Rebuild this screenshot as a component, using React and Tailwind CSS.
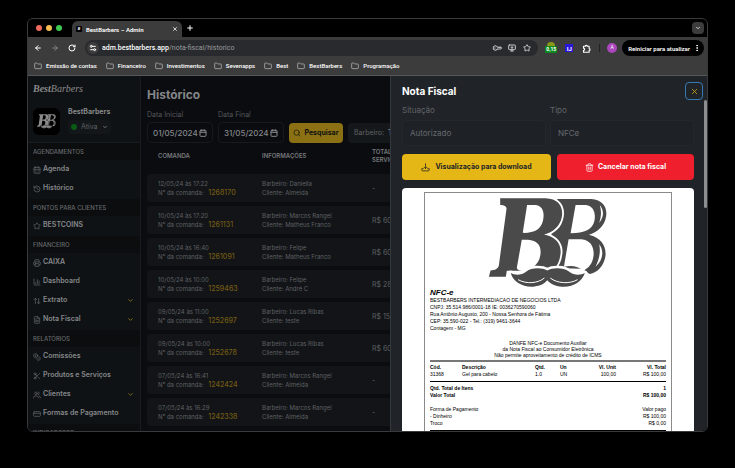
import React from "react";
import {
  ArrowLeft,
  ArrowRight,
  RotateCw,
  Settings2,
  KeyRound,
  MonitorDown,
  Star,
  Folder,
  X,
  Plus,
  ChevronDown,
  History,
  CalendarDays,
  Calendar,
  ArrowUpDown,
  ChartColumn,
  FileText,
  Coins,
  Scissors,
  Users,
  CreditCard,
  Search,
  Trash2,
  EllipsisVertical,
  Printer,
} from "lucide-react";

const bookmarks = [
  "Emissão de contas",
  "Financeiro",
  "Investimentos",
  "Sevenapps",
  "Best",
  "BestBarbers",
  "Programação",
];

const menu = [
  {
    title: "AGENDAMENTOS",
    items: [
      { label: "Agenda", icon: CalendarDays },
      { label: "Histórico", icon: History },
    ],
  },
  {
    title: "PONTOS PARA CLIENTES",
    items: [{ label: "BESTCOINS", icon: Star }],
  },
  {
    title: "FINANCEIRO",
    items: [
      { label: "CAIXA", icon: Printer },
      { label: "Dashboard", icon: ChartColumn },
      { label: "Extrato", icon: ArrowUpDown, expandable: true },
      { label: "Nota Fiscal", icon: FileText, expandable: true },
    ],
  },
  {
    title: "RELATÓRIOS",
    items: [
      { label: "Comissões", icon: Coins },
      { label: "Produtos e Serviços", icon: Scissors },
      { label: "Clientes", icon: Users, expandable: true },
      { label: "Formas de Pagamento", icon: CreditCard },
    ],
  },
  { title: "INDICADORES", items: [] },
];

const orders = [
  { date: "12/05/24 às 17:22", id: "1268170", barber: "Daniella", client: "Almeida", total: "-" },
  { date: "10/05/24 às 17:20", id: "1261131", barber: "Marcos Rangel", client: "Matheus Franco", total: "R$ 60,00" },
  { date: "10/05/24 às 16:40", id: "1261091", barber: "Felipe", client: "Matheus Franco", total: "R$ 60,00" },
  { date: "10/05/24 às 10:00", id: "1259463", barber: "Felipe", client: "André C", total: "R$ 28,00" },
  { date: "09/05/24 às 11:00", id: "1252697", barber: "Lucas Ribas", client: "teste", total: "R$ 15,00" },
  { date: "09/05/24 às 10:00", id: "1252678", barber: "Lucas Ribas", client: "teste", total: "R$ 60,00" },
  { date: "07/05/24 às 16:41", id: "1242424", barber: "Marcos Rangel", client: "Almeida", total: "-" },
  { date: "07/05/24 às 16:29", id: "1242338", barber: "Marcos Rangel", client: "Almeida", total: "-" },
];

function Monogram({ className, ink, paper }) {
  return (
    <svg viewBox="280 48 360 274" className={className} aria-hidden="true">
      <path
        fill={ink}
        d="M488 54 L590 54 C626 57 639 80 635 106 C631 136 608 154 583 162 C622 171 636 198 633 226 C629 256 608 277 586 280 C577 276 574 268 560 264 L480 262 L470 158 Z"
      />
      <path
        fill={paper}
        d="M543 72 L574 72 C597 75 604 95 600 119 C595 146 570 157 528 157 Z M522 175 L560 175 C590 178 600 200 597 226 C594 250 582 262 567 270 C545 252 525 255 508 258 Z"
      />
      <path fill={paper} d="M616 72 C629 88 629 108 614 126 C621 106 621 90 616 72 Z M614 190 C629 208 627 238 603 258 C615 234 619 212 614 190 Z" />
      <path
        fill={ink}
        stroke={paper}
        strokeWidth="11"
        paintOrder="stroke"
        d="M316 52 L452 52 C492 53 506 78 502 106 C497 137 475 154 448 161 C482 167 500 188 498 216 C496 240 488 254 478 266 L372 270 L336 270 L333 288 L282 288 L287 269 C300 268 309 265 312 254 L335 84 C336 76 328 72 316 72 Z"
      />
      <path
        fill={paper}
        d="M397 72 L421 72 C445 74 450 95 445 119 C439 146 418 157 384 156 Z M381 177 L400 177 C430 179 441 197 437 223 C433 250 414 264 394 269 C384 274 368 270 366 262 Z"
      />
      <path
        fill={ink}
        stroke={paper}
        strokeWidth="15"
        strokeLinejoin="round"
        paintOrder="stroke"
        d="M458 269 C440 259 408 261 395 272 C380 284 362 284 348 277 C354 304 385 320 415 318 C438 317 450 308 458 299 C466 308 479 318 503 318 C535 320 562 304 571 277 C557 284 538 284 523 272 C508 261 476 259 458 269 Z"
      />
      <path
        fill="none"
        stroke={paper}
        strokeWidth="3"
        d="M370 297 C395 311 430 308 449 292 M467 292 C487 308 524 311 549 297"
      />
    </svg>
  );
}

function DownloadTray({ className }) {
  return (
    <svg viewBox="0 0 24 24" className={className} fill="none" stroke="currentColor" strokeWidth="2" strokeLinecap="round" strokeLinejoin="round" aria-hidden="true">
      <path d="M12 2v12M8 11l4 4 4-4M6 15H2v3c0 2 1 3 3 3h14c2 0 3-1 3-3v-3h-4" />
    </svg>
  );
}

function ExtensionPiece({ className }) {
  return (
    <svg viewBox="0 0 24 24" className={className} fill="none" stroke="currentColor" strokeWidth="3" strokeLinejoin="round" aria-hidden="true">
      <path d="M4 6h5a2 2 0 0 1 5 0h5v6a2 2 0 0 1 0 5v5H4v-5a3 3 0 0 0 0-6Z" />
    </svg>
  );
}

function BrowserChrome() {
  return (
    <header className="shrink-0 border-b border-[#54575a] bg-[#3c3c3c] font-[Roboto,sans-serif] text-white">
      <div className="flex h-[18px] items-end bg-black">
        <div className="flex w-11 items-center gap-1 self-center pl-2">
          <span className="size-[6px] rounded-full bg-[#ed6a5e]" />
          <span className="size-[6px] rounded-full bg-[#f5bf4f]" />
          <span className="size-[6px] rounded-full bg-[#3fc950]" />
        </div>
        <div className="flex h-4 w-[110px] items-center rounded-t-md bg-[#3c3c3c] px-1">
          <span className="flex size-[6px] items-center justify-center rounded-[1px] bg-black text-[4px] font-bold italic">B</span>
          <span className="ml-1 flex-1 whitespace-nowrap text-[6px] font-semibold">BestBarbers – Admin</span>
          <button type="button" aria-label="Fechar guia"><X className="size-[6px]" strokeWidth={3} /></button>
        </div>
        <button type="button" aria-label="Nova guia" className="ml-1 self-center"><Plus className="size-[8px]" strokeWidth={3} /></button>
        <button type="button" aria-label="Pesquisar guias" className="mr-[3px] ml-auto flex size-3 items-center justify-center self-center rounded-[4px] bg-[#3c3c3c]">
          <ChevronDown className="size-[6px]" strokeWidth={3} />
        </button>
      </div>
      <div className="flex h-[22px] items-center pr-[3px] pl-[6px]">
        <button type="button" aria-label="Voltar"><ArrowLeft className="size-2" strokeWidth={3} /></button>
        <button type="button" aria-label="Avançar" className="ml-[9px] text-[#858585]"><ArrowRight className="size-2" strokeWidth={3} /></button>
        <button type="button" aria-label="Recarregar" className="ml-[9px]"><RotateCw className="size-2" strokeWidth={3} /></button>
        <div className="ml-[9px] flex h-4 flex-1 items-center rounded-full bg-[#282a2d] pr-[7px] pl-[2px]">
          <span className="flex size-3 items-center justify-center rounded-full bg-[#3c3c3c]"><Settings2 className="size-2" strokeWidth={3} /></span>
          <button type="button" className="ml-[3px] flex-1 text-left text-[7px] font-medium whitespace-nowrap text-white">
            adm.bestbarbers.app<span className="font-normal text-[#9a9b9d]">/nota-fiscal/historico</span>
          </button>
          <span className="flex items-center gap-[7px] text-[#c7c7c7]">
            <KeyRound className="size-2 rotate-225" strokeWidth={3} />
            <MonitorDown className="size-2" strokeWidth={3} />
            <Star className="size-2" strokeWidth={3} />
          </span>
        </div>
        <span className="ml-[7px] flex h-3 w-3 flex-col items-center">
          <span className="h-1 w-2 rounded-t-full bg-[#8a9a18]" />
          <span className="rounded-[1px] bg-[#0b8a1d] px-px text-[5px] leading-[7px] font-bold">0,15</span>
        </span>
        <span className="ml-2 flex size-2 items-center justify-center bg-[#2b16dc] text-[6px] font-bold">IJ</span>
        <ExtensionPiece className="ml-[9px] size-[9px]" />
        <span className="ml-2 h-2 w-px bg-[#202124]" />
        <span className="ml-[7px] flex size-[10px] items-center justify-center rounded-full bg-[#ab47bc] text-[5px]">A</span>
        <button type="button" className="ml-[5px] flex h-4 items-center gap-[3px] rounded-full bg-black pr-[3px] pl-[6px] text-[6px] font-semibold whitespace-nowrap">
          Reiniciar para atualizar
          <EllipsisVertical className="size-2" strokeWidth={3} />
        </button>
      </div>
      <nav aria-label="Favoritos" className="flex h-4 items-center gap-[9px] pb-[3px] pl-[6px]">
        {bookmarks.map((name) => (
          <a key={name} href="#" className="flex items-center gap-1 text-[6px] font-medium whitespace-nowrap">
            <Folder className="size-2 text-[#c7c7c7]" />
            {name}
          </a>
        ))}
      </nav>
    </header>
  );
}

function Sidebar() {
  return (
    <aside className="w-[113px] shrink-0 overflow-hidden border-r border-[#181b1e] bg-[#0f1214] text-[#85878a]">
      <div className="flex h-[67px] flex-col border-b border-[#191c1f] px-[5px] pt-[6px]">
        <p className="font-['Liberation_Serif',serif] text-[10px] leading-[13px] text-[#8b8b8c] italic">
          <b>Best</b>Barbers
        </p>
        <div className="mt-[13px] flex items-start gap-2">
          <span className="flex size-[27px] items-center justify-center rounded-md bg-black">
            <Monogram className="w-[19px]" ink="#8b8b8c" paper="#000000" />
          </span>
          <div>
            <p className="text-[7px] leading-[8px] font-bold">BestBarbers</p>
            <div className="mt-1 flex h-[14px] items-center gap-1 rounded bg-[#14171a] px-[3px]">
              <span className="size-[6px] rounded-full bg-[#0a5c14]" />
              <select aria-label="Status" className="appearance-none bg-transparent text-[7px] leading-[10px] text-[#5f6163]">
                <option>Ativa</option>
              </select>
              <ChevronDown className="size-[6px]" strokeWidth={3} />
            </div>
          </div>
        </div>
      </div>
      <nav aria-label="Menu principal">
        {menu.map((group) => (
          <section key={group.title} className="pb-px">
            <h2 className="h-[17px] bg-[#0b0d0f] pl-[5px] text-[6px] leading-[17px] font-medium text-[#66696b]">{group.title}</h2>
            <ul>
              {group.items.map(({ label, icon: Icon, expandable }) => (
                <li key={label}>
                  <a href="#" className="flex h-[19px] items-center gap-[2px] pr-[6px] pl-[5px] text-[7px] font-semibold whitespace-nowrap">
                    <Icon className="size-2 text-[#66696b]" />
                    <span className="flex-1">{label}</span>
                    {expandable && <ChevronDown className="size-[7px] text-[#8a7610]" strokeWidth={3} />}
                  </a>
                </li>
              ))}
            </ul>
          </section>
        ))}
      </nav>
    </aside>
  );
}

function DateField({ id, label, value }) {
  return (
    <div className="w-[66px]">
      <label htmlFor={id} className="block text-[7px] leading-[9px] text-[#55585b]">{label}</label>
      <div className="mt-[3px] flex h-[21px] items-center rounded border border-[#16191d] px-[5px]">
        <input id={id} defaultValue={value} className="w-0 flex-1 bg-transparent text-[8px] font-medium text-[#85878a]" />
        <Calendar className="size-2 shrink-0 text-[#85878a]" strokeWidth={3} />
      </div>
    </div>
  );
}

function HistoryPage() {
  return (
    <main className="min-w-0 flex-1 overflow-hidden bg-[#0a0c10] px-[6px] pt-3">
      <h1 className="text-[12px] leading-[14px] font-bold text-[#858688]">Histórico</h1>
      <form className="mt-2 flex items-end gap-[5px]">
        <DateField id="start" label="Data Inicial" value="01/05/2024" />
        <DateField id="end" label="Data Final" value="31/05/2024" />
        <button type="button" className="flex h-[20px] w-[54px] shrink-0 items-center justify-center gap-[3px] rounded bg-[#8b7113] text-[7px] font-bold text-[#0e1010]">
          <Search className="size-2" />
          Pesquisar
        </button>
        <div className="flex h-[20px] w-[120px] shrink-0 items-center gap-1 rounded bg-[#15181b] px-[6px] text-[7px] text-[#5f6163]">
          <label htmlFor="barber">Barbeiro:</label>
          <select id="barber" className="appearance-none bg-transparent font-bold text-[#77797b]">
            <option>Todos</option>
          </select>
        </div>
      </form>
      <table className="w-full min-w-[480px] table-fixed border-separate border-spacing-x-0 border-spacing-y-1 text-left">
        <thead>
          <tr className="h-[23px] text-[6px] leading-[8px] text-[#77797b]">
            <th className="w-[104px] pb-[6px] pl-[11px] font-semibold">COMANDA</th>
            <th className="w-[110px] pb-[6px] pl-[11px] font-semibold">INFORMAÇÕES</th>
            <th className="pb-[6px] pl-[11px] font-semibold">TOTAL<br />SERVIÇOS</th>
          </tr>
        </thead>
        <tbody>
          {orders.map((o) => (
            <tr key={o.id} className="h-[28px] text-[6px] leading-[9px] text-[#5f6164]">
              <td className="rounded-l bg-[#121417] pl-[11px] whitespace-nowrap">
                <p>{o.date}</p>
                <p>N° da comanda: <span className="ml-[3px] text-[7px] font-medium text-[#735b14]">{o.id}</span></p>
              </td>
              <td className="bg-[#121417] pl-[11px] whitespace-nowrap">
                <p>Barbeiro: {o.barber}</p>
                <p>Cliente: {o.client}</p>
              </td>
              <td className="rounded-r bg-[#121417] pl-[11px] text-[7px]">{o.total}</td>
            </tr>
          ))}
        </tbody>
      </table>
    </main>
  );
}

function ReadField({ id, label, value }) {
  return (
    <div className="flex-1">
      <label htmlFor={id} className="block text-[8px] leading-[9px] text-[#606367]">{label}</label>
      <input id={id} readOnly value={value} className="mt-[5px] h-[26px] w-full rounded border border-[#24282d] bg-[#1e2227] px-[7px] text-[8px] text-[#66696e]" />
    </div>
  );
}

function Invoice() {
  return (
    <div className="mt-2 rounded-t bg-white px-[22px] pt-1 font-['Liberation_Sans',sans-serif] text-[5px] leading-[7px] text-black">
      <article className="border border-[#8a8a8a] px-[5px] pt-1 pb-6">
        <Monogram className="mx-auto h-[91px] w-[120px]" ink="#4a4a4a" paper="#ffffff" />
        <h3 className="text-[8px] leading-[9px] font-bold italic">NFC-e</h3>
        <address className="whitespace-nowrap not-italic">
          BESTBARBERS INTERMEDIACAO DE NEGOCIOS LTDA<br />
          CNPJ: 35.514.986/0001-18 IE: 0036270590060<br />
          Rua Antônio Augusto, 200 - Nossa Senhora de Fátima<br />
          CEP: 35.590-022 - Tel.: (319) 9461-3644<br />
          Contagem - MG
        </address>
        <p className="mt-2 text-center leading-[6px]">
          DANFE NFC-e Documento Auxiliar<br />
          da Nota Fiscal ao Consumidor Eletrônica<br />
          Não permite aproveitamento de crédito de ICMS
        </p>
        <table className="mt-[2px] w-full table-fixed border-t-2 border-b border-t-[#777777] border-b-black">
          <thead>
            <tr className="h-[10px] text-left align-bottom">
              <th className="w-8">Cód.</th>
              <th>Descrição</th>
              <th className="w-[25px]">Qtd.</th>
              <th className="w-5">Un</th>
              <th className="w-9 text-right">Vl. Unit</th>
              <th className="w-[50px] text-right">Vl. Total</th>
            </tr>
          </thead>
          <tbody>
            <tr className="h-[10px] align-top">
              <td>31368</td>
              <td>Gel para cabelo</td>
              <td>1.0</td>
              <td>UN</td>
              <td className="text-right">100,00</td>
              <td className="text-right">R$ 100,00</td>
            </tr>
          </tbody>
        </table>
        <dl className="mt-[3px] grid grid-cols-2 font-bold">
          <dt>Qtd. Total de Itens</dt>
          <dd className="text-right">1</dd>
          <dt>Valor Total</dt>
          <dd className="text-right">R$ 100,00</dd>
        </dl>
        <dl className="mt-[7px] grid grid-cols-2 border-b border-black pb-[3px]">
          <dt>Forma de Pagamento</dt>
          <dd className="text-right">Valor pago</dd>
          <dt>- Dinheiro</dt>
          <dd className="text-right">R$ 100,00</dd>
          <dt>Troco</dt>
          <dd className="text-right">R$ 0,00</dd>
        </dl>
      </article>
    </div>
  );
}

function InvoiceDrawer() {
  return (
    <section role="dialog" aria-label="Nota Fiscal" className="absolute inset-y-0 right-0 flex w-[317px] flex-col overflow-hidden border-l border-[#33393e] bg-[#202327] pl-[11px]">
      <div className="flex shrink-0 items-center justify-between pt-[6px] pr-1">
        <h2 className="text-[10px] leading-[17px] font-bold text-white">Nota Fiscal</h2>
        <button type="button" aria-label="Fechar" className="flex size-[18px] items-center justify-center rounded border border-[#3478b4] text-[#d9b01c]">
          <X className="size-[9px]" />
        </button>
      </div>
      <div className="flex min-h-0 flex-1">
        <div className="min-w-0 flex-1 pt-[6px]">
          <div className="flex gap-1">
            <ReadField id="status" label="Situação" value="Autorizado" />
            <ReadField id="kind" label="Tipo" value="NFCe" />
          </div>
          <div className="mt-2 flex gap-[6px] text-[7px] font-bold">
            <button type="button" className="flex h-[26px] w-[149px] items-center justify-center gap-[5px] rounded bg-[#e5b716] text-[#202327]">
              <DownloadTray className="size-[9px]" />
              Visualização para download
            </button>
            <button type="button" className="flex h-[26px] flex-1 items-center justify-center gap-1 rounded bg-[#ef1f2e] text-white">
              <Trash2 className="size-[9px]" />
              Cancelar nota fiscal
            </button>
          </div>
          <Invoice />
        </div>
        <div className="w-[13px] pl-[10px]">
          <div className="h-[108px] rounded-full bg-[#8c8e90]" />
        </div>
      </div>
    </section>
  );
}

export default function App() {
  return (
    <div className="h-screen overflow-hidden bg-black px-[27px] pt-[18px] pb-9 font-[Inter,sans-serif]">
      <div className="flex h-full flex-col overflow-hidden rounded-md border border-[#3a3a3a]">
        <BrowserChrome />
        <div className="relative flex min-h-0 flex-1">
          <Sidebar />
          <HistoryPage />
          <InvoiceDrawer />
        </div>
      </div>
    </div>
  );
}
